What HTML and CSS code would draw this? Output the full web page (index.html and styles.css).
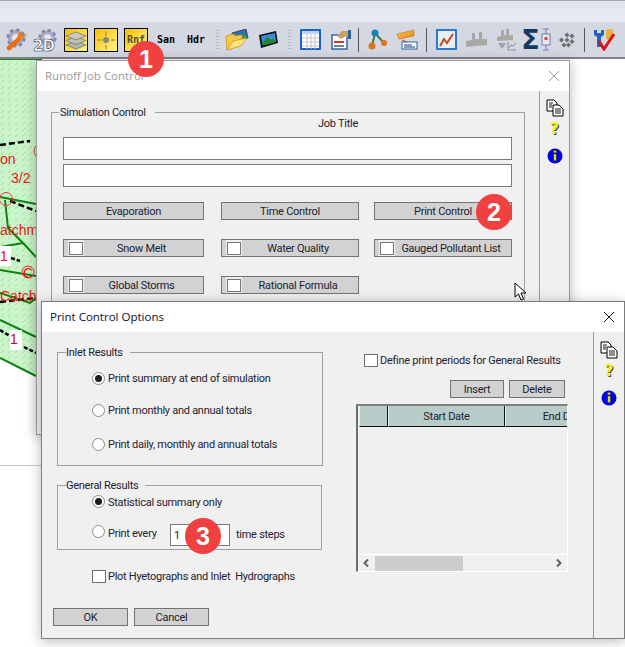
FILE: index.html
```html
<!DOCTYPE html>
<html lang="en">
<head>
<meta charset="utf-8">
<title>Runoff Job Control</title>
<link rel="stylesheet" href="styles.css">
</head>
<body>
<svg class="sprite" width="0" height="0" aria-hidden="true">
  <defs>
    <linearGradient id="orange" x1="0" y1="0" x2="1" y2="1"><stop offset="0" stop-color="#ffc44a"/><stop offset="1" stop-color="#e8810c"/></linearGradient>
    <pattern id="hatch" width="7" height="6" patternUnits="userSpaceOnUse"><path d="M1 5 L4 2" stroke="#b5d2b5" stroke-width="1"/></pattern>
    <symbol id="gear" viewBox="0 0 22 22">
      <circle cx="11" cy="11" r="7" fill="none" stroke="#a6aac6" stroke-width="4"/>
      <circle cx="11" cy="11" r="9" fill="none" stroke="#7f84a4" stroke-width="3" stroke-dasharray="3.6 3.47"/>
      <circle cx="11" cy="11" r="3" fill="#eceef4"/>
    </symbol>
    <symbol id="copy" viewBox="0 0 18 18">
      <path d="M1 1h7l3 3v8H1z" fill="#fff" stroke="#000"/>
      <path d="M7 6h6l4 4v7H7z" fill="#fff" stroke="#000"/>
      <path d="M3 4h4M3 6h3M3 8h3M9 10h6M9 12h6M9 14h6" stroke="#000" stroke-width=".9"/>
    </symbol>
    <symbol id="info" viewBox="0 0 16 16">
      <circle cx="8" cy="8" r="7.5" fill="#0000e6"/>
      <path d="M6.6 2.6h2.8v2.2H6.6zM6.800 6h2.500v6.400h-2.500z" fill="#f5f500" stroke="#303000" stroke-width=".4"/>
    </symbol>
  </defs>
</svg>

<header class="app-bar">
  <div class="menu-strip"></div>
  <div class="toolbar">
    <div class="tool first">
      <svg class="wrench-icon" width="23" height="23" viewBox="0 0 23 23"><use href="#gear" x="1" y="0" width="20" height="20"/><path d="M4 20 L14 11" stroke="#ee6c10" stroke-width="4.500" stroke-linecap="round"/><path d="M12 13 L17 9.500 L20 9 L22 5.500 L19 7.500 L16 6 L18 3 L14 4.500 L12.500 8z" fill="#f37a14"/></svg>
    </div>
    <div class="tool second">
      <svg width="26" height="28" viewBox="0 0 26 28"><use href="#gear" x="7" y="2.500" width="19" height="19"/><text x="2" y="24.500" class="twod">2D</text></svg>
    </div>
    <div class="tool">
      <div class="gold-box">
        <svg width="22" height="22" viewBox="0 0 22 22"><path d="M11 12 L21 16 L11 20 L1 16z" fill="#b4b4ac" stroke="#77776f" stroke-width=".8"/><path d="M11 7.500 L21 11.500 L11 15.500 L1 11.500z" fill="#c0c0b8" stroke="#77776f" stroke-width=".8"/><path d="M11 3 L21 7 L11 11 L1 7z" fill="#c8c8c0" stroke="#77776f" stroke-width=".8"/></svg>
      </div>
    </div>
    <div class="tool">
      <div class="gold-box">
        <svg width="22" height="22" viewBox="0 0 22 22"><path d="M11 2v18M2 11h18" stroke="#c3a84e" stroke-width="2" stroke-dasharray="5 2"/><circle cx="11" cy="11" r="3" fill="#85857f"/></svg>
      </div>
    </div>
    <div class="tool"><div class="gold-box code-label muted-code">Rnf</div></div>
    <div class="tool code-label">San</div>
    <div class="tool code-label">Hdr</div>
    <div class="grip wide"></div>
    <div class="tool">
      <svg width="24" height="22" viewBox="0 0 24 22"><path d="M7 4 L21 0 L23 9 L9 13z" fill="#2a6fb5" stroke="#223" stroke-width=".7"/><path d="M9 10 L14 5 L17 8 L20 5 L22 9 L10 12z" fill="#3e9a3e"/><path d="M1 7 L9 5 L10 7 L17 6 L17 11 L6 20 L2 21z" fill="#f2ca45" stroke="#c79a1d" stroke-width=".8"/><path d="M2 21 L8 12 L22 9 L16 17z" fill="#ffe37a" stroke="#c79a1d" stroke-width=".8"/></svg>
    </div>
    <div class="tool gapped">
      <svg width="20" height="17" viewBox="0 0 20 17"><path d="M1 4 L18 0 L20 12 L3 17z" fill="#0e0e14"/><path d="M3 5 L17 2 L18 11 L4.500 14.500z" fill="#3a8fd0"/><path d="M4 12 L9 6 L13 9 L15 7 L18 11 L4.500 14.500z" fill="#1f8a2c"/></svg>
    </div>
    <div class="grip"></div>
    <div class="tool">
      <svg width="21" height="21" viewBox="0 0 21 21"><rect x="1" y="1" width="19" height="19" fill="#fff" stroke="#1c63c8" stroke-width="2"/><rect x="2" y="2" width="17" height="3" fill="#bcd2ee"/><path d="M2 9h17M2 13h17M2 17h17M7 5v15M11 5v15M15 5v15" stroke="#c4c4c4"/></svg>
    </div>
    <div class="tool gapped">
      <svg width="20" height="20" viewBox="0 0 20 20"><rect x="1" y="5" width="15" height="14" fill="#fff" stroke="#2a5ea0" stroke-width="1.400"/><path d="M3 12h10" stroke="#d92f2f" stroke-width="2"/><path d="M3 16h10" stroke="#2a5ea0" stroke-width="1.500"/><path d="M6 6 L11 1 L19 1 L19 9 L15 6 L10 9z" fill="#c8a25a"/><path d="M17 0h3v9h-3z" fill="#2a5ea0"/></svg>
    </div>
    <div class="rule narrow"></div>
    <div class="tool">
      <svg width="20" height="21" viewBox="0 0 20 21"><path d="M5 17 L8 4 L17 14" stroke="#4c7a36" stroke-width="2" fill="none"/><circle cx="8" cy="4" r="3.500" fill="#1784b8"/><circle cx="5" cy="17" r="3.500" fill="#e2731c"/><circle cx="17" cy="14" r="3" fill="#e2731c"/></svg>
    </div>
    <div class="tool">
      <svg width="22" height="21" viewBox="0 0 22 21"><path d="M1 5 L18 1 L18 7 L3 10z" fill="url(#orange)" stroke="#b56a0a" stroke-width=".5"/><path d="M6 11 L11 13" stroke="#e23a3a"/><rect x="6" y="13" width="15" height="7" fill="#fff" stroke="#2a5ea0"/><path d="M8 16h8M8 18h11" stroke="#123a7a"/></svg>
    </div>
    <div class="rule"></div>
    <div class="tool">
      <svg width="21" height="21" viewBox="0 0 21 21"><rect x="1" y="1" width="19" height="19" fill="#e6eef8" stroke="#2f79cf" stroke-width="2"/><path d="M4 17 L8 10 L11 14 L17 5" fill="none" stroke="#c9471c" stroke-width="2"/></svg>
    </div>
    <div class="tool">
      <svg width="23" height="17" viewBox="0 0 23 17"><path d="M1 10 L7 9 L7 2 L10 2 L10 8 L14 8 L14 1 L17 1 L17 8 L22 8 L22 14 L1 16z" fill="#a8a8a6"/></svg>
    </div>
    <div class="tool">
      <svg width="21" height="22" viewBox="0 0 21 22"><path d="M1 8 L5 7 L5 1 L8 1 L8 6 L10 6 L10 0 L13 0 L13 6 L17 6 L17 11 L1 12z" fill="#a8a8a6"/><path d="M2 14 H10 L6 20z" fill="#a0a0a0"/><path d="M12 13v8h8M13 19l2-3 2 1 3-3" stroke="#909090" fill="none"/></svg>
    </div>
    <div class="tool sigma-tool">
      <span class="sigma">Σ</span>
      <svg width="10" height="23" viewBox="0 0 10 23"><path d="M2 1h6M5 1v5M2 22h6M5 17v5" stroke="#6e7fb0"/><rect x="1" y="6" width="8" height="11" fill="#e8e8f0" stroke="#6e7fb0"/><rect x="3.500" y="9" width="3" height="3" fill="#d44"/></svg>
    </div>
    <div class="tool">
      <svg width="17" height="16" viewBox="0 0 17 16"><g fill="#6e6e6e"><path d="M3.500 5.500l2.500 2.500-2.500 2.500-2.500-2.500zM9 .5l2.500 2.500-2.500 2.500-2.500-2.500zM14 1.500l2.500 2.500-2.500 2.500-2.500-2.500zM9 5.500l2.500 2.500-2.500 2.500-2.500-2.500zM14 7l2.500 2.500-2.500 2.500-2.500-2.500zM6 10.500l2.500 2.500-2.500 2.500-2.500-2.500zM10.500 10.500l2.500 2.500-2.500 2.500-2.500-2.500z"/></g></svg>
    </div>
    <div class="rule short"></div>
    <div class="tool">
      <svg width="25" height="23" viewBox="0 0 25 23"><path d="M3 2 L3 7 L6 9 L6 19 L10 19 L10 9 L13 7 L13 2 L10 2 L10 5 L6 5 L6 2z" fill="#2b5fc0"/><rect x="15" y="1" width="7" height="11" rx="2" fill="#e8b63a"/><path d="M8 13 L13 21 L23 6" fill="none" stroke="#dc1318" stroke-width="3"/></svg>
    </div>
  </div>
</header>

<svg class="map" width="42" height="408" viewBox="0 59 42 408" aria-hidden="true">
  <path d="M0 59H36V376L0 358z" fill="#c8f6c8"/>
  <path d="M0 59H36V376L0 358z" fill="url(#hatch)"/>
  <path d="M0 59.500H56" stroke="#2c7a2c"/>
  <g fill="none" stroke="#0d820d" stroke-width="2">
    <path d="M0 197 L36 204"/>
    <path d="M5 200 L8 228 L23 243 L36 257"/>
    <path d="M0 247 L23 243"/>
    <path d="M0 270 L36 276"/>
    <path d="M0 293 L30 303 L36 298"/>
    <path d="M0 320 L36 337"/>
    <path d="M0 358 L36 376"/>
  </g>
  <g fill="none" stroke="#000" stroke-width="2.500" stroke-dasharray="6 3">
    <path d="M0 145 L30 141"/>
    <path d="M10 201 L36 211"/>
    <path d="M0 302 L36 298"/>
  </g>
  <g fill="none" stroke="#f03030" stroke-width="1">
    <circle cx="6" cy="199" r="6.500"/>
    <circle cx="28" cy="272" r="6"/>
    <circle cx="41" cy="151" r="7"/>
  </g>
  <rect x="0" y="246" width="11" height="20" fill="#fff"/>
  <rect x="10" y="330" width="12" height="20" fill="#fff"/>
  <path d="M11 258 L20 261M0 330 L10 336M24 347 L36 353" stroke="#000" stroke-width="2.500" stroke-dasharray="4 2"/>
  <g class="map-label">
    <text x="0" y="164">on</text>
    <text x="11" y="183">3/2</text>
    <text x="0" y="235">atchm</text>
    <text x="0" y="261">1</text>
    <text x="23" y="278">C</text>
    <text x="0" y="301">Catch</text>
    <text x="10" y="344" class="dark-label">1</text>
  </g>
  <path d="M0 465.500H42" stroke="#c8c8c8"/>
</svg>

<section class="window runoff">
  <div class="title-bar">
    <span class="title faded">Runoff Job Control</span>
    <svg class="close" width="12" height="12" viewBox="0 0 12 12"><path d="M1 1l10 10M11 1L1 11" stroke="#9a9a9a" fill="none"/></svg>
  </div>
  <div class="window-body">
    <div class="runoff-main">
      <fieldset class="group sim">
        <legend>Simulation Control</legend>
        <div class="job-title">Job Title</div>
        <input class="field" type="text">
        <input class="field" type="text">
        <div class="button-grid">
          <button class="btn col-a">Evaporation</button>
          <button class="btn col-b">Time Control</button>
          <button class="btn col-c">Print Control</button>
          <button class="btn col-a with-check"><span class="btn-check"><i></i></span><span class="btn-label">Snow Melt</span></button>
          <button class="btn col-b with-check"><span class="btn-check"><i></i></span><span class="btn-label">Water Quality</span></button>
          <button class="btn col-c with-check"><span class="btn-check"><i></i></span><span class="btn-label">Gauged Pollutant List</span></button>
          <button class="btn col-a with-check"><span class="btn-check"><i></i></span><span class="btn-label">Global Storms</span></button>
          <button class="btn col-b with-check"><span class="btn-check"><i></i></span><span class="btn-label">Rational Formula</span></button>
        </div>
      </fieldset>
    </div>
    <aside class="side runoff-side">
      <svg width="18" height="18"><use href="#copy"/></svg>
      <span class="help">?</span>
      <svg width="16" height="16"><use href="#info"/></svg>
    </aside>
  </div>
</section>

<svg class="cursor" width="13" height="19" viewBox="0 0 13 19"><path d="M1 1 L1 15 L4.500 12 L7 18 L9.500 17 L7 11 L12 11z" fill="#fff" stroke="#000"/></svg>

<section class="window print">
  <div class="title-bar">
    <span class="title">Print Control Options</span>
    <svg class="close" width="12" height="12" viewBox="0 0 12 12"><path d="M1 1l10 10M11 1L1 11" stroke="#111" fill="none"/></svg>
  </div>
  <div class="window-body">
    <div class="print-main">
      <div class="print-left">
        <fieldset class="group inlet">
          <legend>Inlet Results</legend>
          <label class="opt first-opt"><span class="radio on"></span>Print summary at end of simulation</label>
          <label class="opt second-opt"><span class="radio"></span>Print monthly and annual totals</label>
          <label class="opt third-opt"><span class="radio"></span>Print daily, monthly and annual totals</label>
        </fieldset>
        <fieldset class="group general">
          <legend>General Results</legend>
          <label class="opt stat-opt"><span class="radio on"></span><span class="nudge">Statistical summary only</span></label>
          <div class="opt every-opt"><span class="radio"></span><span class="every-label">Print every</span><input class="steps" type="text" value="1"><span class="steps-label">time steps</span></div>
        </fieldset>
        <label class="opt plot-opt"><span class="check"></span>Plot Hyetographs and Inlet &nbsp;Hydrographs</label>
        <div class="dialog-actions">
          <button class="btn action">OK</button>
          <button class="btn action">Cancel</button>
        </div>
      </div>
      <div class="print-right">
        <label class="opt define-opt"><span class="check"></span>Define print periods for General Results</label>
        <div class="grid-actions">
          <button class="btn insert">Insert</button>
          <button class="btn delete">Delete</button>
        </div>
        <div class="data-grid">
          <div class="grid-head">
            <div class="cell corner"></div>
            <div class="cell">Start Date</div>
            <div class="cell">End Date</div>
          </div>
          <div class="grid-rows"></div>
          <div class="hscroll">
            <svg class="arrow" width="6" height="8" viewBox="0 0 6 8"><path d="M5 0.500 L1.500 4 L5 7.500" fill="none" stroke="#606060" stroke-width="2"/></svg>
            <div class="track"><div class="thumb"></div></div>
            <svg class="arrow" width="6" height="8" viewBox="0 0 6 8"><path d="M1 0.500 L4.500 4 L1 7.500" fill="none" stroke="#606060" stroke-width="2"/></svg>
          </div>
        </div>
      </div>
    </div>
    <aside class="side print-side">
      <svg width="18" height="18"><use href="#copy"/></svg>
      <span class="help">?</span>
      <svg width="16" height="16"><use href="#info"/></svg>
    </aside>
  </div>
</section>

<span class="badge badge-1">1</span>
<span class="badge badge-2">2</span>
<span class="badge badge-3">3</span>
</body>
</html>
```
FILE: styles.css
```css
* { box-sizing: border-box; }

html, body {
  margin: 0;
  padding: 0;
}

body {
  position: relative;
  width: 625px;
  height: 647px;
  overflow: hidden;
  background: #fff;
  font-family: Roboto, "Liberation Sans", sans-serif;
  font-size: 11px;
  letter-spacing: -.27px;
  color: #1d2230;
}

.sprite { position: absolute; }

/* application bar */
.app-bar {
  height: 59px;
  border-top: 1px solid #a6a8b0;
  border-bottom: 2px solid #808288;
}

.menu-strip {
  height: 21px;
  background: linear-gradient(#e2e4ed, #e9ebf3);
}

.toolbar {
  display: flex;
  align-items: center;
  height: 35px;
  background: #d4d8e2;
}

.tool {
  display: flex;
  flex: none;
  align-items: center;
  justify-content: center;
  width: 30px;
  height: 30px;
}

.tool.first { width: 29px; }
.tool.second { margin-right: 2px; }
.tool.gapped { margin-left: 1px; }

.wrench-icon { margin-left: 3px; }

.gold-box {
  display: flex;
  align-items: center;
  justify-content: center;
  width: 24px;
  height: 24px;
  border: 1px solid #000;
  background: linear-gradient(135deg, #f7be00, #fff68a);
}

.code-label {
  font-family: "DejaVu Sans Mono", "Liberation Mono", monospace;
  font-size: 10px;
  font-weight: 700;
  letter-spacing: 0;
  color: #000;
}

.muted-code { color: #55513a; }

.twod {
  font-family: "DejaVu Sans", sans-serif;
  font-size: 15px;
  font-weight: 700;
  letter-spacing: -1px;
  fill: #fff;
  stroke: #333;
  stroke-width: .6px;
}

.sigma-tool { gap: 1px; }

.sigma {
  font-family: "DejaVu Sans", sans-serif;
  font-size: 27px;
  font-weight: 700;
  line-height: 1;
  letter-spacing: 0;
  color: #123a62;
}

.grip {
  flex: none;
  width: 3px;
  height: 20px;
  margin: 0 4px 0 5px;
  background: repeating-linear-gradient(#b6b9c2 0 1px, transparent 1px 3px);
}

.grip.wide { margin: 0 3px 0 5px; }

.rule {
  flex: none;
  width: 1px;
  height: 24px;
  margin: 0 4px;
  background: #55585f;
}

.rule.narrow { margin: 0 3px 0 2px; }
.rule.short { margin: 0 3px; }

/* background map */
.map {
  position: absolute;
  left: 0;
  top: 59px;
}

.map-label text {
  font-family: "Liberation Sans", sans-serif;
  font-size: 14px;
  letter-spacing: 0;
  fill: #f01414;
}

.map-label .dark-label { fill: #c01010; }

/* windows */
.window {
  position: absolute;
  display: flex;
  flex-direction: column;
  background: #f0f0f0;
  border: 1px solid #7c7c7c;
  box-shadow: 0 2px 12px rgba(0, 0, 0, .28);
}

.runoff {
  left: 36px;
  top: 60px;
  width: 534px;
  height: 375px;
  border-color: #9a9a9a;
}

.print {
  left: 41px;
  top: 301px;
  width: 584px;
  height: 338px;
}

.title-bar {
  display: flex;
  flex: none;
  align-items: center;
  justify-content: space-between;
  height: 30px;
  padding: 0 9px 1px 8px;
  background: #fff;
}

.title {
  font-family: "Open Sans", "Noto Sans", sans-serif;
  font-size: 11.5px;
  letter-spacing: 0;
  color: #0d1030;
}

.title.faded { color: #9a9a9a; }

.window-body {
  display: flex;
  flex: 1;
  min-height: 0;
}

.side {
  display: flex;
  flex: none;
  flex-direction: column;
  align-items: center;
  width: 30px;
  padding-top: 8px;
  border-left: 1px solid #9a9a9a;
}

.print-side { width: 31px; padding-top: 9px; }

.help {
  height: 22px;
  margin: 1px 0 8px;
  font-family: "DejaVu Sans", sans-serif;
  font-size: 15px;
  font-weight: 700;
  line-height: 22px;
  letter-spacing: 0;
  color: #f5f500;
  text-shadow: 1px 1px 0 #444;
}

/* groups */
.group {
  min-width: 0;
  margin: 0;
  padding: 0;
  border: 1px solid #a0a0a0;
}

.group legend {
  margin-left: 9px;
  padding: 2px 7px 0 0;
  line-height: 14px;
}

.runoff-main {
  flex: 1;
  min-width: 0;
  padding: 13px 14px 0;
}

.sim {
  height: 301px;
  padding: 0 12px 0 11px;
}

.group.sim legend {
  margin-left: -4px;
  padding: 2px 9px 0 1px;
}

.job-title {
  height: 14px;
  margin-top: -3px;
  margin-bottom: 6px;
  padding-left: 101px;
  text-align: center;
  line-height: 14px;
}

.field {
  display: block;
  width: 100%;
  height: 23px;
  margin: 0 0 4px;
  padding: 0;
  background: #fff;
  border: 1px solid #7a7a7a;
  border-radius: 0;
}

.btn {
  display: block;
  height: 18px;
  padding: 2px 0 0;
  font: inherit;
  line-height: 14px;
  letter-spacing: inherit;
  color: inherit;
  background: #d2d2d2;
  border: 1px solid #737373;
  border-radius: 0;
}

.button-grid {
  display: grid;
  grid-template-columns: 158px 153px 138px;
  row-gap: 19px;
  margin-top: 15px;
}

.col-a { width: 141px; }
.col-b { width: 138px; }
.col-c { width: 138px; }

.with-check {
  display: flex;
  align-items: stretch;
  padding: 0;
  line-height: 17px;
}

.btn-check {
  display: flex;
  flex: none;
  align-items: center;
  justify-content: center;
  width: 16px;
  margin-left: 4px;
  background: #f0f0f0;
}

.btn-check i {
  display: block;
  width: 14px;
  height: 13px;
  background: #fff;
  border: 1px solid #767676;
}

.btn-label {
  flex: 1;
  padding-right: 4px;
}

/* print dialog */
.print-main {
  display: flex;
  flex: 1;
  gap: 33px;
  min-width: 0;
  padding: 12px 0 0 15px;
}

.print-left {
  flex: none;
  width: 266px;
}

.inlet { height: 122px; }

.group.inlet legend,
.group.general legend { margin-left: 8px; }

.general {
  width: 265px;
  height: 73px;
  margin-top: 11px;
}

.opt {
  display: flex;
  align-items: center;
  height: 20px;
  margin-left: 34px;
  white-space: nowrap;
}

.first-opt { margin-top: 8px; }
.second-opt { margin-top: 12px; }
.third-opt { margin-top: 14px; }
.stat-opt { height: 18px; margin-top: -1px; }
.every-opt { height: 22px; margin-top: 14px; }
.nudge { padding-top: 2px; }

.radio {
  flex: none;
  position: relative;
  width: 13px;
  height: 13px;
  margin-right: 3px;
  background: #fff;
  border: 1px solid #8b8b8b;
  border-radius: 50%;
}

.every-opt .radio { top: -4px; }

.radio.on::after {
  content: "";
  position: absolute;
  left: 2px;
  top: 2px;
  width: 7px;
  height: 7px;
  background: #1c1c1c;
  border-radius: 50%;
}

.check {
  flex: none;
  width: 14px;
  height: 13px;
  margin-right: 2px;
  background: #fff;
  border: 1px solid #6f6f6f;
}

.every-label {
  width: 62px;
  padding-bottom: 3px;
}

.steps {
  width: 60px;
  height: 22px;
  padding: 0 0 0 3px;
  font: inherit;
  letter-spacing: inherit;
  color: inherit;
  background: #fff;
  border: 1px solid #7a7a7a;
  border-radius: 0;
}

.steps-label {
  margin-left: 6px;
  padding-bottom: 1px;
}

.plot-opt {
  margin-top: 16px;
  margin-left: 35px;
}

.dialog-actions {
  display: flex;
  gap: 6px;
  margin: 22px 0 0 -4px;
}

.action { width: 75px; }

.print-right {
  flex: none;
  width: 212px;
  padding-top: 1px;
}

.define-opt {
  height: 16px;
  margin: 7px 0 0 8px;
}

.grid-actions {
  display: flex;
  justify-content: flex-end;
  gap: 5px;
  margin: 12px 3px 0 0;
}

.insert { width: 54px; }
.delete { width: 56px; }

.data-grid {
  display: flex;
  flex-direction: column;
  width: 212px;
  height: 168px;
  margin-top: 6px;
  overflow: hidden;
  border-top: 2px solid #808080;
  border-left: 2px solid #6e6e6e;
  border-right: 1px solid #fff;
  border-bottom: 1px solid #fff;
}

.grid-head {
  display: flex;
  flex: none;
  height: 21px;
  padding-left: 1px;
}

.cell {
  flex: none;
  width: 117px;
  height: 21px;
  text-align: center;
  line-height: 21px;
  background: #b7cbc9;
  border-left: 1px solid #e8f0ef;
  border-right: 1px solid #111;
  border-bottom: 1px solid #111;
}

.corner { width: 29px; }

.grid-rows { flex: 1; }

.hscroll {
  display: flex;
  flex: none;
  align-items: center;
  height: 17px;
  padding: 0 5px;
  border-top: 1px solid #fff;
}

.arrow { flex: none; }

.track {
  flex: 1;
  padding-left: 6px;
}

.thumb {
  width: 88px;
  height: 15px;
  background: #cdcdcd;
}

/* overlays */
.cursor {
  position: absolute;
  left: 514px;
  top: 282px;
}

.badge {
  position: absolute;
  display: flex;
  align-items: center;
  justify-content: center;
  width: 36px;
  height: 36px;
  font-family: "Liberation Sans", sans-serif;
  font-size: 25px;
  font-weight: 700;
  letter-spacing: 0;
  color: #fff;
  background: #f04040;
  border-radius: 50%;
}

.badge-1 { left: 128px; top: 41px; }
.badge-2 { left: 476px; top: 194px; }
.badge-3 { left: 185px; top: 518px; }
```
